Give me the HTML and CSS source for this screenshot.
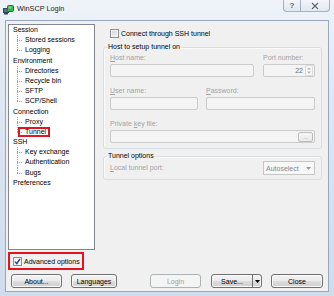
FILE: index.html
```html
<!DOCTYPE html>
<html>
<head>
<meta charset="utf-8">
<title>WinSCP Login</title>
<link rel="stylesheet" href="styles.css">
</head>
<body>
<div class="window">
  <div class="titlebar">
    <svg class="app-icon" width="11" height="10" viewBox="0 0 11 10">
      <rect x="0.5" y="3.5" width="5" height="4" fill="#5a6f86" stroke="#34465a"/>
      <rect x="1" y="8" width="4" height="1.5" fill="#34465a"/>
      <rect x="4.5" y="0.5" width="6" height="6" rx="1" fill="#36b24a" stroke="#1f7a2e"/>
      <rect x="5.5" y="1.5" width="3" height="2" fill="#7fdc8a"/>
    </svg>
    <span class="title">WinSCP Login</span>
    <div class="caption">
      <span class="cap-btn help">?</span>
      <span class="cap-btn close">
        <svg width="10" height="8" viewBox="0 0 10 8">
          <path d="M2 1 L8 7 M8 1 L2 7" stroke="#ffffff" stroke-width="3" fill="none"/>
          <path d="M2 1 L8 7 M8 1 L2 7" stroke="#5e6670" stroke-width="1.4" fill="none"/>
        </svg>
      </span>
    </div>
  </div>
  <div class="client">
    <div class="main">
      <div class="left">
        <div class="tree">
          <div class="item">Session</div>
          <div class="item child">Stored sessions</div>
          <div class="item child last">Logging</div>
          <div class="item">Environment</div>
          <div class="item child">Directories</div>
          <div class="item child">Recycle bin</div>
          <div class="item child">SFTP</div>
          <div class="item child last">SCP/Shell</div>
          <div class="item">Connection</div>
          <div class="item child">Proxy</div>
          <div class="item child last"><span class="marked">Tunnel</span></div>
          <div class="item">SSH</div>
          <div class="item child">Key exchange</div>
          <div class="item child">Authentication</div>
          <div class="item child last">Bugs</div>
          <div class="item">Preferences</div>
        </div>
        <div class="advanced">
          <span class="cb checked">
            <svg width="7" height="7" viewBox="0 0 7 7"><path d="M1 3.6 L2.8 5.6 L6 0.8" stroke="#1f3f8f" stroke-width="1.4" fill="none"/></svg>
          </span>
          <span>Advanced options</span>
        </div>
      </div>
      <div class="right">
        <div class="check-row"><span class="cb"></span><span>Connect through SSH tunnel</span></div>
        <fieldset class="group">
          <legend>Host to setup tunnel on</legend>
          <div class="row">
            <div class="field host">
              <div class="lbl"><u>H</u>ost name:</div>
              <div class="input"></div>
            </div>
            <div class="field port">
              <div class="lbl">Port number:</div>
              <div class="input spin">
                <span class="val">22</span>
                <span class="spinner">
                  <svg width="6" height="9" viewBox="0 0 6 9"><path d="M1 3.5 L3 1.5 L5 3.5 Z M1 5.5 L3 7.5 L5 5.5 Z" fill="#b3b3b3"/></svg>
                </span>
              </div>
            </div>
          </div>
          <div class="row">
            <div class="field user">
              <div class="lbl"><u>U</u>ser name:</div>
              <div class="input"></div>
            </div>
            <div class="field pass">
              <div class="lbl"><u>P</u>assword:</div>
              <div class="input"></div>
            </div>
          </div>
          <div class="row">
            <div class="field key">
              <div class="lbl">Private <u>k</u>ey file:</div>
              <div class="input browse"><span class="dots">...</span></div>
            </div>
          </div>
        </fieldset>
        <fieldset class="group tunnel-group">
          <legend>Tunnel options</legend>
          <div class="port-row">
            <span class="lbl"><u>L</u>ocal tunnel port:</span>
            <div class="combo">
              <span class="combo-val">Autoselect</span>
              <span class="combo-arrow">
                <svg width="5" height="3" viewBox="0 0 5 3"><path d="M0 0 L5 0 L2.5 3 Z" fill="#9a9a9a"/></svg>
              </span>
            </div>
          </div>
        </fieldset>
      </div>
    </div>
    <div class="buttons">
      <span class="btn about">About...</span>
      <span class="btn languages">Languages</span>
      <span class="btn login disabled">Login</span>
      <span class="btn save">
        <span class="split-main">Save...</span>
        <span class="split-arrow">
          <svg width="5" height="3" viewBox="0 0 5 3"><path d="M0 0 L5 0 L2.5 3 Z" fill="#000"/></svg>
        </span>
      </span>
      <span class="btn close-btn">Close</span>
    </div>
  </div>
</div>
</body>
</html>
```

FILE: styles.css
```css
* { box-sizing: border-box; }
html, body { margin: 0; padding: 0; }
body {
  width: 334px;
  height: 296px;
  overflow: hidden;
  font-family: "Liberation Sans", Arial, sans-serif;
  font-size: 7px;
  color: #000;
  background: #cfdcec;
}
.window {
  width: 334px;
  height: 296px;
  display: flex;
  flex-direction: column;
  background: linear-gradient(180deg, #eef3f9 0%, #dfe8f3 30%, #cfdcec 100%);
}
.titlebar {
  height: 20px;
  flex: none;
  display: flex;
  align-items: flex-start;
}
.app-icon { margin: 5px 0 0 3px; flex: none; }
.title {
  margin-left: 3px;
  line-height: 18px;
  font-size: 7.3px;
  color: #1a1a1a;
}
.caption { margin-left: auto; margin-right: 4px; display: flex; }
.cap-btn {
  height: 12px;
  display: flex;
  align-items: center;
  justify-content: center;
  border: 1px solid rgba(80, 100, 130, 0.45);
  border-top: none;
  background: linear-gradient(#f3f6fa, #dfe7f0);
}
.help {
  width: 18px;
  border-radius: 0 0 0 4px;
  font-size: 8px;
  font-weight: bold;
  color: #5e6670;
}
.close {
  width: 29px;
  border-left: none;
  border-radius: 0 0 4px 0;
}
.client {
  flex: 1;
  margin: 0 5px 4px;
  border: 1px solid #97a8bd;
  background: #f0f0f0;
  display: flex;
  flex-direction: column;
}
.main {
  display: flex;
  gap: 8px;
  padding: 3px 6px 0 2px;
}
.left {
  width: 87px;
  flex: none;
  display: flex;
  flex-direction: column;
}
.tree {
  height: 226px;
  border: 1px solid #828790;
  background: #fff;
  padding-left: 4px;
}
.item {
  height: 10.2px;
  line-height: 10.2px;
  white-space: nowrap;
}
.child {
  padding-left: 12px;
  background-image:
    repeating-linear-gradient(to bottom, #a0a0a0 0 1px, transparent 1px 2px),
    repeating-linear-gradient(to right, #a0a0a0 0 1px, transparent 1px 2px);
  background-size: 1px 100%, 6px 1px;
  background-position: 4px 0, 4px 5px;
  background-repeat: no-repeat;
}
.child.last { background-size: 1px 5px, 6px 1px; }
.marked {
  display: inline-block;
  position: relative;
  height: 10.2px;
}
.marked::after {
  content: "";
  position: absolute;
  left: -7px;
  right: -4px;
  top: 0;
  bottom: 0;
  border: 2px solid #e3141f;
}
.advanced {
  margin-top: 2px;
  width: 76px;
  height: 18px;
  border: 2px solid #e3141f;
  display: flex;
  align-items: center;
  gap: 2px;
  padding-left: 3px;
}
.cb {
  width: 9px;
  height: 9px;
  flex: none;
  display: inline-flex;
  align-items: center;
  justify-content: center;
  border: 1px solid #8e8f8f;
  background: linear-gradient(135deg, #cfd3d8, #f7f7f7);
  box-shadow: inset 0 0 0 1px #f4f4f4;
}
.cb.checked { background: linear-gradient(135deg, #e8ecf2, #ffffff); }
.right {
  flex: 1;
  display: flex;
  flex-direction: column;
}
.check-row {
  height: 18px;
  display: flex;
  align-items: center;
  gap: 2px;
  padding-left: 7px;
}
.group {
  margin: 0;
  min-width: 0;
  border: 1px solid #d5dfe5;
  border-radius: 3px;
  padding: 1px 6px 5px;
  box-shadow: inset 1px 1px 0 #fbfbfb;
}
.group legend {
  padding: 0 1px;
  margin-left: -3px;
  line-height: 10px;
}
.tunnel-group { margin-top: 2px; padding: 0 6px 4px; }
.row { display: flex; }
.row + .row { margin-top: 9px; }
.field {
  display: flex;
  flex-direction: column;
  gap: 1px;
}
.lbl { line-height: 10px; color: #a3a3a3; white-space: nowrap; }
.input {
  height: 13px;
  border: 1px solid #cbcbcb;
  border-radius: 2px;
  background: #f4f4f4;
}
.host { width: 144px; }
.port { width: 52px; margin-left: 9px; }
.user { width: 88px; }
.pass { width: 109px; margin-left: 8px; }
.key { width: 100%; }
.spin {
  display: flex;
  align-items: center;
  justify-content: flex-end;
  padding-right: 1px;
}
.val { color: #6d6d6d; margin-right: 2px; }
.spinner {
  width: 8px;
  height: 11px;
  display: flex;
  align-items: center;
  justify-content: center;
  border: 1px solid #dadada;
  border-radius: 1px;
  background: #f7f7f7;
}
.browse {
  display: flex;
  align-items: center;
  justify-content: flex-end;
  padding-right: 1px;
}
.dots {
  width: 15px;
  height: 10px;
  border: 1px solid #bdbdbd;
  border-radius: 2px;
  background: linear-gradient(#f6f6f6, #e9e9e9);
  color: #9a9a9a;
  font-size: 6px;
  line-height: 8px;
  text-align: center;
}
.port-row {
  height: 14px;
  display: flex;
  align-items: center;
  justify-content: space-between;
}
.combo {
  width: 52px;
  height: 14px;
  border: 1px solid #c6c6c6;
  background: #f7f7f7;
  display: flex;
  align-items: center;
  padding-left: 2px;
}
.combo-val { flex: 1; color: #8a8a8a; }
.combo-arrow {
  width: 11px;
  height: 12px;
  display: flex;
  align-items: center;
  justify-content: center;
}
.buttons {
  display: flex;
  margin-top: 4px;
  padding: 0 5px;
}
.btn {
  height: 14px;
  display: flex;
  align-items: center;
  justify-content: center;
  border: 1px solid #707070;
  border-radius: 3px;
  background: linear-gradient(#f3f3f3 0%, #ebebeb 50%, #dddddd 50%, #cfcfcf 100%);
  box-shadow: inset 0 0 0 1px #fafafa;
  white-space: nowrap;
}
.about { width: 51px; }
.languages { width: 46px; margin-left: 9px; }
.login { width: 51px; margin-left: auto; }
.save { width: 51px; margin-left: 10px; justify-content: stretch; }
.close-btn { width: 52px; margin-left: 9px; }
.disabled {
  border-color: #adb2b5;
  background: #f4f4f4;
  color: #a0a0a0;
  box-shadow: none;
}
.split-main { flex: 1; text-align: center; }
.split-arrow {
  width: 9px;
  height: 100%;
  display: flex;
  align-items: center;
  justify-content: center;
  border-left: 1px solid #707070;
}
```
